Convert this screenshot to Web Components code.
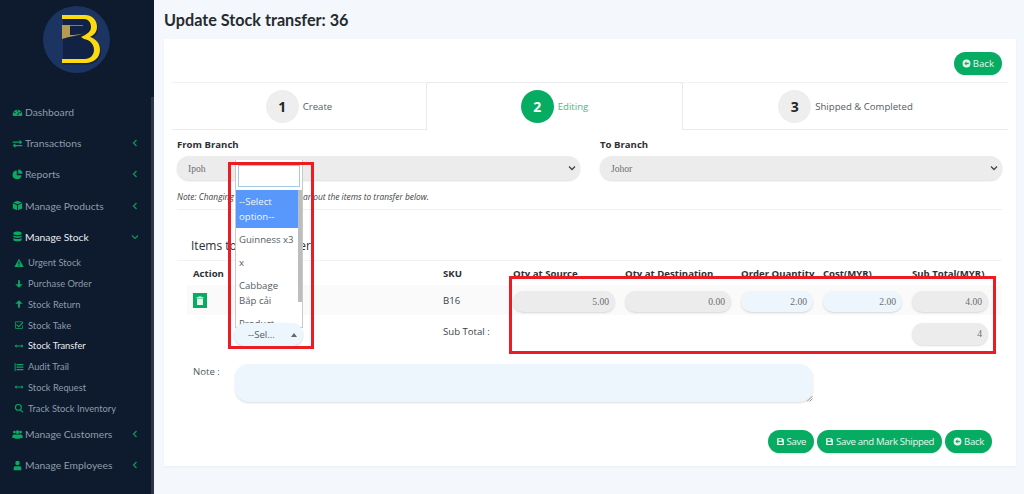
<!DOCTYPE html>
<html>
<head>
<meta charset="utf-8">
<title>Update Stock transfer</title>
<style>
    html, body { margin: 0; height: 494px; overflow: hidden; background: #f4f7fb; }
    body { font-family: "Open Sans", "Liberation Sans", sans-serif; color: #212529; font-size: 11px; }
    #app { display: flex; height: 494px; }
</style>
</head>
<body>
<div id="app">
    <side-bar>
        <nav-item icon="gauge" label="Dashboard"></nav-item>
        <nav-item icon="swap" label="Transactions" chevron="left"></nav-item>
        <nav-item icon="pie" label="Reports" chevron="left"></nav-item>
        <nav-item icon="cube" label="Manage Products" chevron="left"></nav-item>
        <nav-item icon="db" label="Manage Stock" chevron="down" open></nav-item>
        <sub-menu>
            <nav-item sub icon="warn" label="Urgent Stock"></nav-item>
            <nav-item sub icon="down" label="Purchase Order"></nav-item>
            <nav-item sub icon="up" label="Stock Return"></nav-item>
            <nav-item sub icon="check" label="Stock Take"></nav-item>
            <nav-item sub icon="arrows" label="Stock Transfer" open></nav-item>
            <nav-item sub icon="list" label="Audit Trail"></nav-item>
            <nav-item sub icon="arrows" label="Stock Request"></nav-item>
            <nav-item sub icon="search" label="Track Stock Inventory"></nav-item>
        </sub-menu>
        <nav-item icon="users" label="Manage Customers" chevron="left"></nav-item>
        <nav-item icon="user" label="Manage Employees" chevron="left"></nav-item>
    </side-bar>
    <main-area>
        <span slot="title">Update Stock transfer: 36</span>
        <form-card>
            <top-actions><green-btn icon="back">Back</green-btn></top-actions>
            <step-tabs>
                <step-tab num="1" label="Create" w="254"></step-tab>
                <step-tab num="2" label="Editing" w="257" active></step-tab>
                <step-tab num="3" label="Shipped &amp; Completed" w="325"></step-tab>
            </step-tabs>
            <branch-form></branch-form>
            <transfer-table></transfer-table>
            <note-row></note-row>
            <bottom-actions>
                <green-btn icon="save">Save</green-btn>
                <green-btn icon="save">Save and Mark Shipped</green-btn>
                <green-btn icon="back">Back</green-btn>
            </bottom-actions>
        </form-card>
    </main-area>
</div>

<script>
const icons = {
    gauge: '<path d="M1 11a7 7 0 1 1 14 0c0 1-.4 2-1 2H2c-.6 0-1-1-1-2z"/><g fill="#0e1a2e"><circle cx="4" cy="8" r="1"/><circle cx="8" cy="5.5" r="1"/><circle cx="12" cy="8" r="1"/><path d="M7.2 11.5 10.5 7l.6.4-2.4 4.8z"/></g>',
    swap: '<path d="M1 4.500h10V2l4 3.500-4 3.500V6.500H1zM15 9.500H5V7L1 10.500 5 14v-2.500h10z" transform="translate(0 .5)"/>',
    pie: '<path d="M7 2a6.500 6.500 0 1 0 6.800 7H7z"/><path d="M9 .8V7h6.200A6.500 6.500 0 0 0 9 .8z"/>',
    cube: '<path d="M8 1 14.500 3.500 8 6 1.500 3.500zM1.200 4.800 7.300 7.200V15L1.200 12.400zM14.800 4.800 8.700 7.200V15l6.100-2.600z"/>',
    db: '<path d="M2 3c0-3 12-3 12 0v1.500c0 2-12 2-12 0zM2 6c2 2 10 2 12 0v2.500c0 2-12 2-12 0zM2 10c2 2 10 2 12 0v3c0 2.500-12 2.500-12 0z"/>',
    warn: '<path fill-rule="evenodd" d="M8 1 15.500 14.500H.5zM7.200 5.500v5h1.600v-5zM7.200 11.500v1.500h1.600v-1.500z"/>',
    down: '<path d="M6.500 2h3v6.500H14L8 14 2 8.500h4.500z"/>',
    up: '<path d="M6.500 14h3V7.500H14L8 2 2 7.500h4.500z"/>',
    check: '<path fill-rule="evenodd" d="M2 2.500h12v2l-1.200 1.200V3.700H3.200v9.100h9.600V9l1.200-1.200v6.200H2z"/><path d="M4.700 6.800 7.500 9.500 13.500 3.500l1.200 1.300-7.200 7.200-4-4z"/>',
    arrows: '<path d="M4 5v2.300h8V5l3 3-3 3V8.700H4V11L1 8z"/>',
    list: '<path d="M1 1.500h1.500v13H1zM4 3h11v2H4zM4 7h11v2H4zM4 11h11v2H4z"/>',
    search: '<path fill-rule="evenodd" d="M7 1.500a5.500 5.500 0 1 1 0 11 5.500 5.500 0 0 1 0-11zM7 3.300a3.700 3.700 0 1 0 0 7.400 3.700 3.700 0 0 0 0-7.400z"/><path d="m10.500 10 4.500 4.300-1.300 1.300-4.400-4.400z"/>',
    users: '<circle cx="3.500" cy="4.500" r="2"/><circle cx="12.500" cy="4.500" r="2"/><circle cx="8" cy="4.500" r="2.700"/><path d="M3.500 8H5v5H.5v-2.500C.5 9 2 8 3.500 8zM11 8h1.500c1.500 0 3 1 3 2.500V13H11zM6 8h4c1 0 1.800.8 1.800 2v4H4.200v-4C4.200 8.800 5 8 6 8z"/>',
    user: '<circle cx="8" cy="4.500" r="3.300"/><path d="M5 9h6c1.500 0 2.500 1 2.500 2.500V15h-11v-3.500C2.500 10 3.500 9 5 9z"/>',
    back: '<path fill-rule="evenodd" d="M8 1a7 7 0 1 1 0 14A7 7 0 0 1 8 1zM8 4.200 4.200 8 8 11.800V9.300h4V6.700H8z"/>',
    save: '<path fill-rule="evenodd" d="M2 2h9.500L14 4.500V14H2zM4.500 3.500v3h5.500v-3zM4.500 9v3.500h7V9z"/>'
};

function iconSvg(name, size) {
    return `<svg width="${size}" height="${size}" viewBox="0 0 16 16" fill="currentColor" aria-hidden="true">${icons[name]}</svg>`;
}

class SideBar extends HTMLElement {
    constructor() {
        super();
        this.attachShadow({ mode: 'open' }).innerHTML = `<style>
            :host { display: block; position: relative; flex: 0 0 154px; height: 494px; background: #0e1a2e; overflow: hidden; }
            .logo { display: flex; justify-content: center; padding: 6px 0 0 0; height: 96.5px; box-sizing: border-box; margin-right: 1px; }
            nav { display: flex; flex-direction: column; padding-right: 3px; }
            .bar { position: absolute; right: 0; top: 97px; bottom: 0; width: 3px; background: #2c3545; }
        </style>
        <div class="logo">
            <svg width="67" height="67" viewBox="0 0 67 67">
                <circle cx="33.500" cy="33.500" r="33.500" fill="#1b3461"/>
                <path d="M20 10.500h23c8 0 12 6 12 12 0 5-3 8-7 10 6 2 10 6 10 13 0 8-7 13-14 13H20z" fill="#0b1830" opacity=".6"/>
                <path d="M19 9h23c8 0 12 6 12 12 0 5-3 8-7 10 6 2 10 6 10 13 0 8-7 13-14 13H19v-4h23c5 0 9-4 9-9 0-6-4-10-10-11l-3-2c6-3 10-5 10-10 0-5-3-8-7-8H19z" fill="#fdd90f"/>
                <path d="M19 19h21v.8H27v9.200c5 0 10-.6 15-2-7 3-15 3-23 6z" fill="#b59a53"/>
            </svg>
        </div>
        <nav><slot></slot></nav>
        <div class="bar"></div>`;
    }
}

class SubMenu extends HTMLElement {
    constructor() {
        super();
        this.attachShadow({ mode: 'open' }).innerHTML = `<style>
            :host { display: flex; flex-direction: column; }
        </style><slot></slot>`;
    }
}

class NavItem extends HTMLElement {
    connectedCallback() {
        const sub = this.hasAttribute('sub');
        const chevron = this.getAttribute('chevron');
        let chevronMark = '';
        if (chevron === 'left') chevronMark = '<svg class="chev" width="8" height="8" viewBox="0 0 8 8"><path d="M5.500 1 2.500 4l3 3" fill="none" stroke="currentColor" stroke-width="1.200"/></svg>';
        if (chevron === 'down') chevronMark = '<svg class="chev" width="8" height="8" viewBox="0 0 8 8"><path d="M1 2.500 4 5.500l3-3" fill="none" stroke="currentColor" stroke-width="1.200"/></svg>';
        this.attachShadow({ mode: 'open' }).innerHTML = `<style>
            :host { display: block; }
            .row { display: flex; align-items: center; height: ${sub ? 20.75 : 31.2}px; padding-left: ${sub ? 14 : 12}px; color: ${this.hasAttribute('open') ? '#e8edf2' : '#8d9cab'}; font: ${sub ? 9.3 : 10.3}px Lato, "Liberation Sans", sans-serif; white-space: nowrap; }
            .ic { color: #0aa860; display: flex; width: ${sub ? 14 : 13.5}px; margin-right: ${sub ? 0 : -0.5}px; }
            .label { flex: 1; }
            .chev { color: #0a9a58; margin-right: 12px; }
        </style>
        <div class="row"><span class="ic">${iconSvg(this.getAttribute('icon'), sub ? 10 : 11)}</span><span class="label">${this.getAttribute('label')}</span>${chevronMark}</div>`;
    }
}

class MainArea extends HTMLElement {
    constructor() {
        super();
        this.attachShadow({ mode: 'open' }).innerHTML = `<style>
            :host { display: block; flex: 1; padding: 0 8px 0 10px; min-width: 0; }
            h1 { margin: 0; height: 39px; font: 700 16.2px/40px Lato, "Liberation Sans", sans-serif; color: #262b30; }
        </style>
        <h1><slot name="title"></slot></h1>
        <slot></slot>`;
    }
}

class FormCard extends HTMLElement {
    constructor() {
        super();
        this.attachShadow({ mode: 'open' }).innerHTML = `<style>
            :host { display: block; height: 427px; background: #fff; box-shadow: 0 1px 2px rgba(0,0,0,.04); padding: 0 8px; box-sizing: border-box; }
        </style><slot></slot>`;
    }
}

class TopActions extends HTMLElement {
    constructor() {
        super();
        this.attachShadow({ mode: 'open' }).innerHTML = `<style>
            :host { display: flex; justify-content: flex-end; height: 43px; padding: 13px 6px 0 0; box-sizing: border-box; }
        </style><slot></slot>`;
    }
}

class BottomActions extends HTMLElement {
    constructor() {
        super();
        this.attachShadow({ mode: 'open' }).innerHTML = `<style>
            :host { display: flex; justify-content: flex-end; gap: 3px; padding: 28px 16px 0 0; letter-spacing: -.32px; }
        </style><slot></slot>`;
    }
}

class GreenBtn extends HTMLElement {
    connectedCallback() {
        this.attachShadow({ mode: 'open' }).innerHTML = `<style>
            :host { display: inline-flex; align-items: center; justify-content: center; gap: 2px; height: 23px; padding: 0 8px; background: #07ac63; color: #e6f7ee; border-radius: 12px; font-size: 9.6px; white-space: nowrap; box-shadow: 0 1px 1px rgba(0,0,0,.08); }
            svg { display: block; }
        </style>${iconSvg(this.getAttribute('icon'), 9)}<slot></slot>`;
    }
}

class StepTabs extends HTMLElement {
    constructor() {
        super();
        this.attachShadow({ mode: 'open' }).innerHTML = `<style>
            :host { display: flex; height: 48px; border-top: 1px solid #f1f2f4; box-sizing: border-box; }
        </style><slot></slot>`;
    }
}

class StepTab extends HTMLElement {
    connectedCallback() {
        const active = this.hasAttribute('active');
        this.attachShadow({ mode: 'open' }).innerHTML = `<style>
            :host { display: flex; align-items: center; justify-content: center; gap: 4px; flex: 0 0 ${this.getAttribute('w')}px; box-sizing: border-box; height: ${active ? 48 : 47}px; border-bottom: ${active ? 'none' : '1px solid #e8eaec'}; ${active ? 'border: 1px solid #e8eaec; border-bottom: none; border-radius: 3px 3px 0 0; margin-top: -1px;' : ''} font-size: 9.6px; color: ${active ? '#3fbc83' : '#555c63'}; }
            .num { width: 33px; height: 33px; border-radius: 50%; display: flex; align-items: center; justify-content: center; background: ${active ? '#07ac63' : '#eeeeee'}; color: ${active ? '#fff' : '#22262a'}; font-size: 14px; font-weight: 700; }
        </style>
        <span class="num">${this.getAttribute('num')}</span><span>${this.getAttribute('label')}</span>`;
    }
}

class PillField extends HTMLElement {
    connectedCallback() {
        const blue = this.hasAttribute('blue');
        const select = this.hasAttribute('select');
        const chevron = select ? '<svg width="8" height="6" viewBox="0 0 8 6"><path d="M1 1.500 4 4.500l3-3" fill="none" stroke="#444" stroke-width="1.300"/></svg>' : '';
        this.attachShadow({ mode: 'open' }).innerHTML = `<style>
            :host { display: flex; align-items: center; box-sizing: border-box; height: ${select ? 24 : 21}px; padding: 0 ${select ? 4 : 6}px 0 ${select ? 11 : 6}px; border-radius: 12px; background: ${blue ? '#edf5fd' : '#ececec'}; box-shadow: 0 1px 2px rgba(0,0,0,.14); font: 9.6px "Liberation Serif", serif; color: #6e6e6e; justify-content: ${select ? 'space-between' : 'flex-end'}; }
        </style><span><slot></slot></span>${chevron}`;
    }
}

class BranchForm extends HTMLElement {
    constructor() {
        super();
        this.attachShadow({ mode: 'open' }).innerHTML = `<style>
            :host { display: block; padding: 0 6px 0 5px; }
            .cols { display: grid; grid-template-columns: 403px 402px; column-gap: 20px; padding-top: 8px; }
            label { display: block; font-size: 9.6px; font-weight: 700; color: #2c3034; line-height: 13px; margin-bottom: 5px; }
            p { margin: 0; font-size: 8.4px; font-style: italic; line-height: 11px; padding: 11px 0 7px; color: #3d4246; border-bottom: 1px solid #eff0f1; }
        </style>
        <div class="cols">
            <div><label>From Branch</label><pill-field select>Ipoh</pill-field></div>
            <div><label>To Branch</label><pill-field select>Johor</pill-field></div>
        </div>
        <p>Note: Changing the branch will clear out the items to transfer below.</p>`;
    }
}

class TransferTable extends HTMLElement {
    constructor() {
        super();
        this.attachShadow({ mode: 'open' }).innerHTML = `<style>
            :host { display: block; position: relative; padding: 0 6px 0 5px; font-size: 9.6px; color: #3a3f44; }
            h4 { margin: 0; height: 51px; padding: 27px 0 0 14px; box-sizing: border-box; font-size: 12px; font-weight: 400; line-height: 17px; color: #2c3034; border-bottom: 1px solid #f1f2f3; }
            h4 span { margin-left: 24px; }
            .grid { display: grid; grid-template-columns: 250px 70px 112px 116px 82px 89px 76px; align-items: center; margin-left: 10px; }
            .head { height: 24px; font-weight: 700; color: #2c3034; white-space: nowrap; padding-left: 6px; }
            .row { height: 30px; background: #fafafa; padding-left: 6px; }
            .foot { height: 33px; padding-left: 6px; }
            pill-field { margin: 2px 10px 0 0; }
            pill-field.last { margin-right: 0; }
            .foot pill-field { margin-top: 4px; }
            .trash { display: flex; align-items: center; justify-content: center; width: 14px; height: 15px; background: #07ac63; color: #e6f7ee; }
        </style>
        <h4>Items to <span>Transfer</span></h4>
        <div class="grid head"><span>Action</span><span>SKU</span><span>Qty at Source</span><span>Qty at Destination</span><span>Order Quantity</span><span>Cost(MYR)</span><span>Sub Total(MYR)</span></div>
        <div class="grid row">
            <span class="trash"><svg width="8" height="9" viewBox="0 0 8 9" fill="currentColor"><path d="M0.500 1.200h2V.5h3v.7h2V2.200h-7zM1 2.800h6V9H1z"/></svg></span>
            <span>B16</span>
            <pill-field>5.00</pill-field>
            <pill-field>0.00</pill-field>
            <pill-field blue>2.00</pill-field>
            <pill-field blue>2.00</pill-field>
            <pill-field class="last">4.00</pill-field>
        </div>
        <div class="grid foot">
            <span></span><span style="white-space:nowrap">Sub Total :</span><span></span><span></span><span></span><span></span>
            <pill-field class="last" style="height:22px">4</pill-field>
        </div>
        <select-drop></select-drop>
        <mark-box style="left:56px;top:-48px;width:86px;height:187px"></mark-box>
        <mark-box style="left:337px;top:66px;width:487px;height:78px"></mark-box>`;
    }
}

// the open option list of the product dropdown, lies over the form
class SelectDrop extends HTMLElement {
    constructor() {
        super();
        this.attachShadow({ mode: 'open' }).innerHTML = `<style>
            :host { position: absolute; left: 63px; top: -50px; width: 68px; height: 186px; font-size: 9.6px; color: #555c63; }
            .panel { height: 168px; background: #fff; border: 1px solid #c9c9c9; border-top: none; box-sizing: border-box; overflow: hidden; position: relative; }
            .search { display: block; box-sizing: border-box; width: 62px; height: 22px; margin: 5px 0 3px 2px; border: 1px solid #a6c8e0; background: #fff; }
            .opts { width: 63px; line-height: 15px; }
            .opt { padding: 4px 3px; white-space: normal; }
            .opt.on { background: #5897fb; color: #f0f6ff; }
            .scroll { position: absolute; right: 0; top: 30px; width: 4px; height: 112px; background: #bdbdbd; }
            .sel { position: relative; margin: -5px 0 0 -1px; height: 23px; width: 69px; border-radius: 12px; background: #edf5fd; box-shadow: 0 1px 2px rgba(0,0,0,.18); display: flex; align-items: center; justify-content: space-between; box-sizing: border-box; padding: 0 6px 0 14px; color: #555c63; }
            .caret { width: 0; height: 0; border: 3px solid transparent; border-bottom: 4px solid #666; border-top: none; }
        </style>
        <div class="panel">
            <input class="search">
            <div class="opts">
                <div class="opt on">--Select option--</div>
                <div class="opt">Guinness x3</div>
                <div class="opt">x</div>
                <div class="opt">Cabbage Bắp cải</div>
                <div class="opt">Product</div>
            </div>
            <div class="scroll"></div>
        </div>
        <div class="sel"><span>--Sel...</span><span class="caret"></span></div>`;
    }
}

// red annotation frame drawn on top of the screenshot
class MarkBox extends HTMLElement {
    constructor() {
        super();
        this.attachShadow({ mode: 'open' }).innerHTML = `<style>
            :host { position: absolute; box-sizing: border-box; border: 3px solid #ed1c24; pointer-events: none; }
        </style>`;
    }
}

class NoteRow extends HTMLElement {
    constructor() {
        super();
        this.attachShadow({ mode: 'open' }).innerHTML = `<style>
            :host { display: flex; padding: 16px 0 0 21px; font-size: 9.6px; color: #50565b; }
            span { width: 42px; line-height: 13px; padding-top: 1px; }
            .area { position: relative; width: 578px; height: 38px; background: #edf5fd; border-radius: 14px; box-shadow: 0 1px 2px rgba(0,0,0,.14); }
            svg { position: absolute; right: 0; bottom: 0; }
        </style>
        <span>Note :</span>
        <div class="area"><svg width="7" height="7" viewBox="0 0 7 7"><path d="M1 6.500 6.500 1M3.500 6.500 6.500 3.500" stroke="#777" stroke-width=".8"/></svg></div>`;
    }
}

customElements.define('side-bar', SideBar);
customElements.define('sub-menu', SubMenu);
customElements.define('nav-item', NavItem);
customElements.define('main-area', MainArea);
customElements.define('form-card', FormCard);
customElements.define('top-actions', TopActions);
customElements.define('bottom-actions', BottomActions);
customElements.define('green-btn', GreenBtn);
customElements.define('step-tabs', StepTabs);
customElements.define('step-tab', StepTab);
customElements.define('pill-field', PillField);
customElements.define('branch-form', BranchForm);
customElements.define('select-drop', SelectDrop);
customElements.define('mark-box', MarkBox);
customElements.define('transfer-table', TransferTable);
customElements.define('note-row', NoteRow);
</script>
</body>
</html>
